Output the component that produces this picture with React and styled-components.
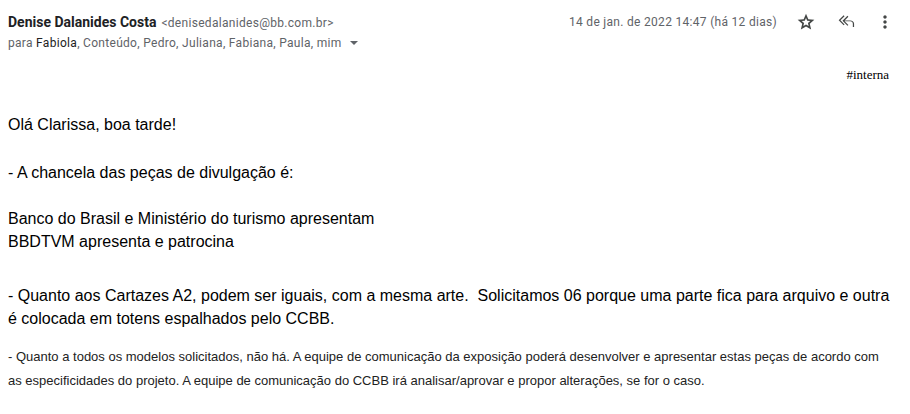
import React from "react";
import styled, { createGlobalStyle } from "styled-components";

const Global = createGlobalStyle`
  html, body { margin: 0; padding: 0; background: #fff; }
  body { font-family: Roboto, Arial, sans-serif; }
`;

const Page = styled.div`
  width: 910px;
  box-sizing: border-box;
  padding: 0 0 0 8px;
`;

const Header = styled.div`
  display: flex;
  align-items: flex-start;
  justify-content: space-between;
  padding-top: 12px;
`;

const Sender = styled.div`
  display: flex;
  flex-direction: column;
`;

const NameLine = styled.div`
  display: flex;
  align-items: baseline;
  gap: 5px;
  line-height: 20px;
`;

const Name = styled.span`
  font-family: Roboto, sans-serif;
  font-weight: 700;
  font-size: 14px;
  color: #202124;
`;

const Email = styled.span`
  font-family: Roboto, sans-serif;
  font-size: 12px;
  letter-spacing: 0.3px;
  color: #5f6368;
`;

const ToLine = styled.div`
  display: flex;
  align-items: center;
  font-family: Roboto, sans-serif;
  font-size: 12px;
  letter-spacing: 0.3px;
  line-height: 20px;
  color: #5f6368;
`;

const Strong = styled.span`
  color: #222;
`;

const Caret = styled.span`
  display: inline-block;
  width: 0;
  height: 0;
  margin-left: 8px;
  border-left: 4px solid transparent;
  border-right: 4px solid transparent;
  border-top: 4px solid #5f6368;
`;

const Meta = styled.div`
  display: flex;
  align-items: center;
  padding-right: 15px;
`;

const DateText = styled.span`
  font-family: Roboto, sans-serif;
  font-size: 12px;
  letter-spacing: 0.3px;
  color: #5f6368;
  margin-right: 19px;
  line-height: 20px;
`;

const IconButton = styled.span`
  width: 20px;
  height: 20px;
  display: flex;
  align-items: center;
  justify-content: center;
  margin-left: ${(p) => p.$gap || 0}px;
  color: #444746;
`;

const Tag = styled.div`
  text-align: right;
  font-family: "Liberation Serif", "Times New Roman", serif;
  font-size: 13px;
  color: #000;
  padding-right: 21px;
  margin-top: 14px;
`;

const Body = styled.div`
  margin-top: 30px;
  padding-right: 16px;
  font-family: "Liberation Sans", Arial, sans-serif;
  font-size: 16px;
  line-height: 23px;
  color: #000;
  white-space: pre-wrap;
`;

const Para = styled.p`
  margin: 0 0 ${(p) => p.$after || 23}px 0;
`;

const Small = styled.p`
  margin: 0;
  font-family: "Liberation Sans", Arial, sans-serif;
  font-size: 13px;
  line-height: 24px;
  color: #222;
`;

const Star = () => (
  <svg width="20" height="20" viewBox="0 -960 960 960" fill="currentColor">
    <path d="m354-287 126-76 126 77-33-144 111-96-146-13-58-136-58 135-146 13 111 97-33 143ZM233-120l65-281L80-590l288-25 112-265 112 265 288 25-218 189 65 281-247-149-247 149Zm247-350Z" />
  </svg>
);

const ReplyAll = () => (
  <svg width="20" height="20" viewBox="0 -960 960 960" fill="currentColor">
    <path d="M320-320 80-560l240-240 43 43-197 197 197 197-43 43Zm440 80v-160q0-50-35-85t-85-35H366l180 180-43 43-240-240 240-240 43 43-180 180h274q75 0 127.5 52.5T820-400v160h-60Z" />
  </svg>
);

const MoreVert = () => (
  <svg width="20" height="20" viewBox="0 -960 960 960" fill="currentColor">
    <path d="M480-160q-33 0-56.5-23.5T400-240q0-33 23.5-56.5T480-320q33 0 56.5 23.5T560-240q0 33-23.5 56.5T480-160Zm0-240q-33 0-56.5-23.5T400-480q0-33 23.5-56.5T480-560q33 0 56.5 23.5T560-480q0 33-23.5 56.5T480-400Zm0-240q-33 0-56.5-23.5T400-720q0-33 23.5-56.5T480-800q33 0 56.5 23.5T560-720q0 33-23.5 56.5T480-640Z" />
  </svg>
);

export default function App() {
  return (
    <>
      <Global />
      <Page>
        <Header>
          <Sender>
            <NameLine>
              <Name>Denise Dalanides Costa</Name>
              <Email>&lt;denisedalanides@bb.com.br&gt;</Email>
            </NameLine>
            <ToLine>
              para&nbsp;<Strong>Fabiola</Strong>, Conteúdo, Pedro, Juliana, Fabiana, Paula, mim
              <Caret />
            </ToLine>
          </Sender>
          <Meta>
            <DateText>14 de jan. de 2022 14:47 (há 12 dias)</DateText>
            <IconButton><Star /></IconButton>
            <IconButton $gap={21}><ReplyAll /></IconButton>
            <IconButton $gap={18}><MoreVert /></IconButton>
          </Meta>
        </Header>
        <Tag>#interna</Tag>
        <Body>
          <Para $after={25}>Olá Clarissa, boa tarde!</Para>
          <Para>- A chancela das peças de divulgação é:</Para>
          <Para $after={31}>
            Banco do Brasil e Ministério do turismo apresentam{"\n"}BBDTVM apresenta e patrocina
          </Para>
          <Para $after={15}>
            - Quanto aos Cartazes A2, podem ser iguais, com a mesma arte.  Solicitamos 06 porque uma parte fica para arquivo e outra é colocada em totens espalhados pelo CCBB.
          </Para>
          <Small>
            - Quanto a todos os modelos solicitados, não há. A equipe de comunicação da exposição poderá desenvolver e apresentar estas peças de acordo com as especificidades do projeto. A equipe de comunicação do CCBB irá analisar/aprovar e propor alterações, se for o caso.
          </Small>
        </Body>
      </Page>
    </>
  );
}
